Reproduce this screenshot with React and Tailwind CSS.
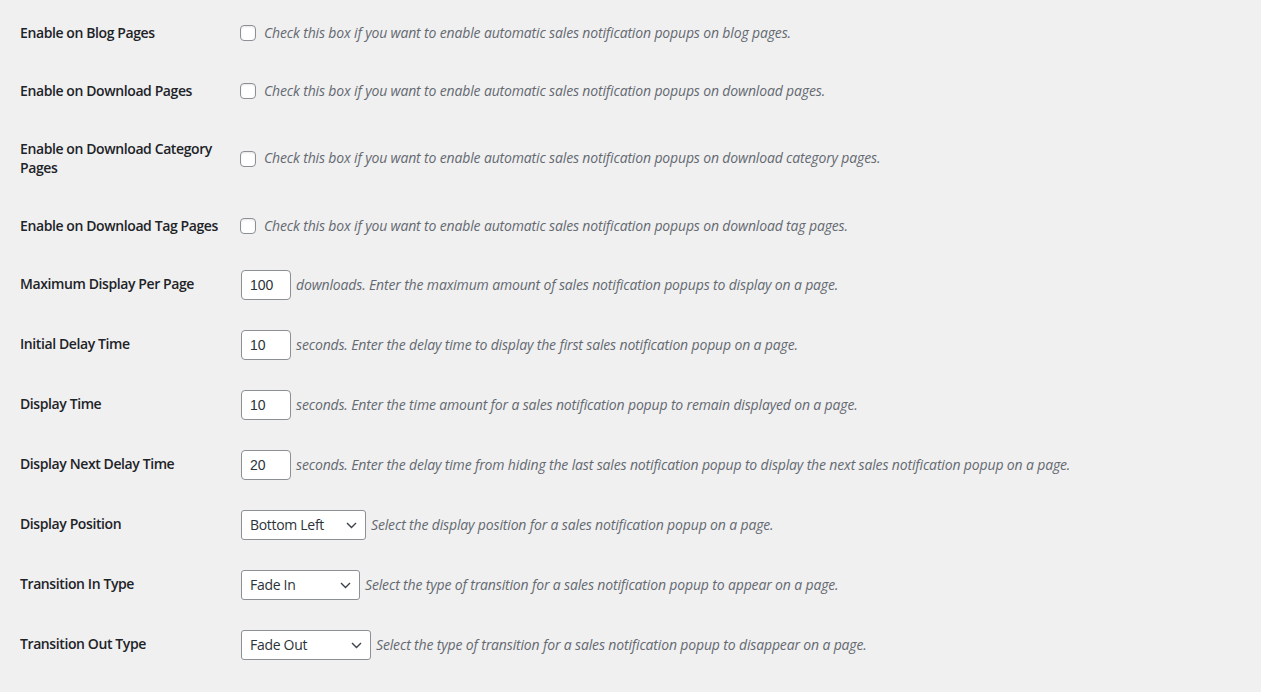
import React from "react";

const FONT = { fontFamily: '"Open Sans", "Noto Sans", sans-serif' };

const Checkbox = () => (
  <span className="inline-block w-4 h-4 shrink-0 rounded-[4px] border border-[#8c8f94] bg-white shadow-[inset_0_1px_2px_rgba(0,0,0,0.1)] mr-[3px]" />
);

const NumberInput = ({ value }) => (
  <span
    className="inline-flex items-center w-[50px] h-[30px] shrink-0 ml-px rounded-[4px] border border-[#8c8f94] bg-white px-2 text-[14px] text-[#2c3338]"
    style={{ fontFamily: '"Liberation Sans", Arial, sans-serif' }}
  >
    {value}
  </span>
);

const Select = ({ value, width }) => (
  <span
    className={`inline-flex items-center justify-between h-[30px] shrink-0 ml-px rounded-[3px] border border-[#8c8f94] bg-white pl-2 pr-2 text-[14px] tracking-[-0.3px] text-[#2c3338] ${width}`}
  >
    <span>{value}</span>
    <svg width="11" height="7" viewBox="0 0 11 7" className="mt-[1px]">
      <polyline
        points="1,1 5.5,5.5 10,1"
        fill="none"
        stroke="#3c434a"
        strokeWidth="1.4"
      />
    </svg>
  </span>
);

const Desc = ({ children }) => (
  <span className="italic text-[#646970] whitespace-nowrap tracking-[-0.15px]">
    {children}
  </span>
);

const Row = ({ label, children }) => (
  <div className="flex">
    <div className="w-[210px] shrink-0 py-5 pr-2.5 font-semibold leading-[1.3] tracking-[-0.4px] text-[#1d2327]">
      {label}
    </div>
    <div className="flex items-center gap-[5px] px-2.5 py-[15px] leading-[1.3]">
      {children}
    </div>
  </div>
);

const checkboxRows = [
  ["Enable on Blog Pages", "blog pages."],
  ["Enable on Download Pages", "download pages."],
  [
    <>
      Enable on Download Category
      <br />
      Pages
    </>,
    "download category pages.",
  ],
  ["Enable on Download Tag Pages", "download tag pages."],
];

export default function App() {
  return (
    <div className="min-h-screen bg-[#f0f0f1] pt-1 pl-5 text-[14px]" style={FONT}>
      {checkboxRows.map(([label, tail], i) => (
        <Row key={i} label={<span className="whitespace-nowrap">{label}</span>}>
          <Checkbox />
          <Desc>
            Check this box if you want to enable automatic sales notification
            popups on {tail}
          </Desc>
        </Row>
      ))}

      <Row label="Maximum Display Per Page">
        <NumberInput value="100" />
        <Desc>
          downloads. Enter the maximum amount of sales notification popups to
          display on a page.
        </Desc>
      </Row>
      <Row label="Initial Delay Time">
        <NumberInput value="10" />
        <Desc>
          seconds. Enter the delay time to display the first sales notification
          popup on a page.
        </Desc>
      </Row>
      <Row label="Display Time">
        <NumberInput value="10" />
        <Desc>
          seconds. Enter the time amount for a sales notification popup to
          remain displayed on a page.
        </Desc>
      </Row>
      <Row label="Display Next Delay Time">
        <NumberInput value="20" />
        <Desc>
          seconds. Enter the delay time from hiding the last sales notification
          popup to display the next sales notification popup on a page.
        </Desc>
      </Row>

      <Row label="Display Position">
        <Select value="Bottom Left" width="w-[125px]" />
        <Desc>
          Select the display position for a sales notification popup on a page.
        </Desc>
      </Row>
      <Row label="Transition In Type">
        <Select value="Fade In" width="w-[119px]" />
        <Desc>
          Select the type of transition for a sales notification popup to
          appear on a page.
        </Desc>
      </Row>
      <Row label="Transition Out Type">
        <Select value="Fade Out" width="w-[130px]" />
        <Desc>
          Select the type of transition for a sales notification popup to
          disappear on a page.
        </Desc>
      </Row>
    </div>
  );
}
